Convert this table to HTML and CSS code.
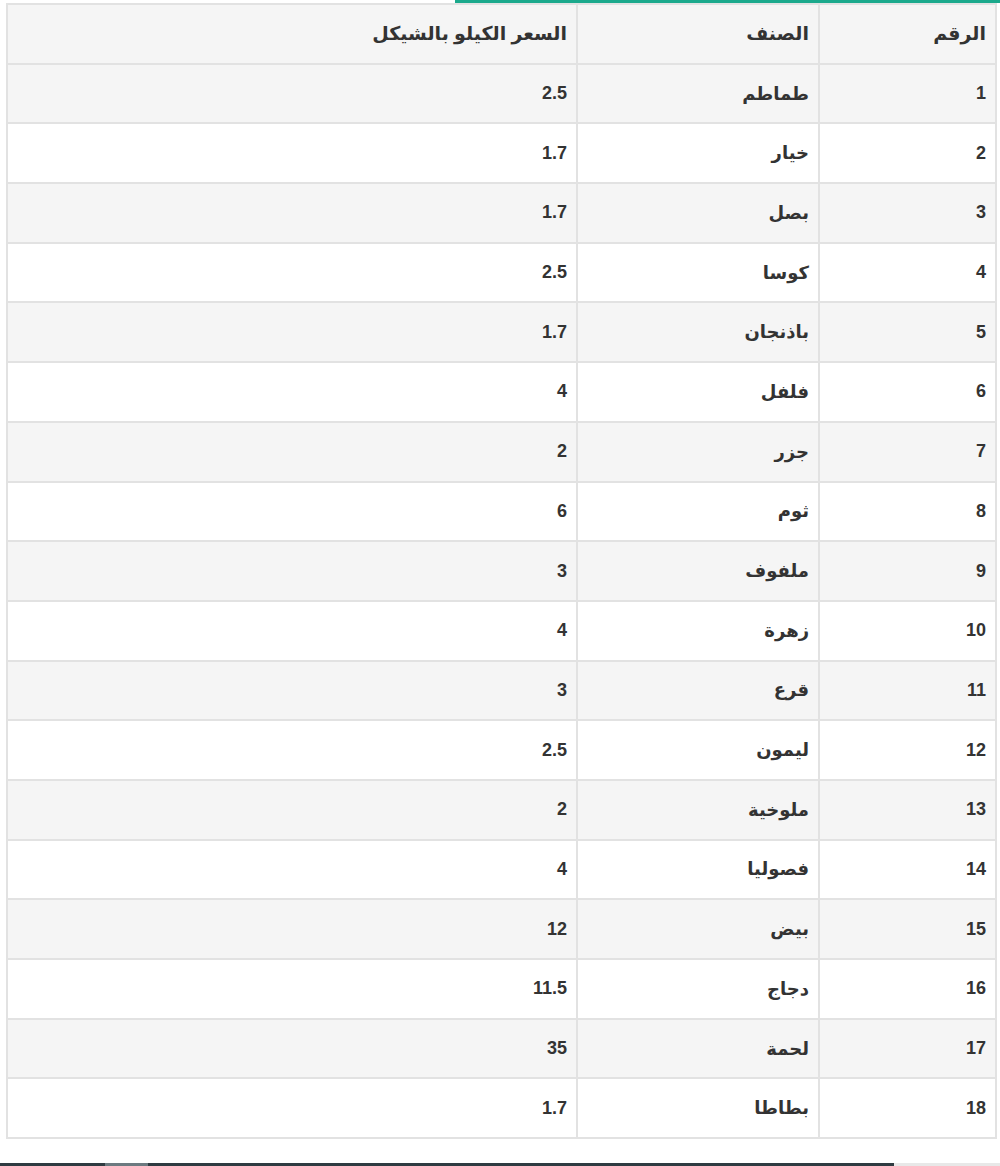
FILE: index.html
```html
<!DOCTYPE html>
<html lang="ar" dir="rtl">
<head>
<meta charset="utf-8">
<link rel="stylesheet" href="styles.css">
</head>
<body>
<div class="page">
  <div class="topbar"><div class="accent"></div></div>
  <table class="prices">
    <colgroup><col class="c-num"><col class="c-item"><col class="c-price"></colgroup>
    <thead>
      <tr><th>الرقم</th><th>الصنف</th><th>السعر الكيلو بالشيكل</th></tr>
    </thead>
    <tbody>
      <tr><td>1</td><td>طماطم</td><td>2.5</td></tr>
      <tr><td>2</td><td>خيار</td><td>1.7</td></tr>
      <tr><td>3</td><td>بصل</td><td>1.7</td></tr>
      <tr><td>4</td><td>كوسا</td><td>2.5</td></tr>
      <tr><td>5</td><td>باذنجان</td><td>1.7</td></tr>
      <tr><td>6</td><td>فلفل</td><td>4</td></tr>
      <tr><td>7</td><td>جزر</td><td>2</td></tr>
      <tr><td>8</td><td>ثوم</td><td>6</td></tr>
      <tr><td>9</td><td>ملفوف</td><td>3</td></tr>
      <tr><td>10</td><td>زهرة</td><td>4</td></tr>
      <tr><td>11</td><td>قرع</td><td>3</td></tr>
      <tr><td>12</td><td>ليمون</td><td>2.5</td></tr>
      <tr><td>13</td><td>ملوخية</td><td>2</td></tr>
      <tr><td>14</td><td>فصوليا</td><td>4</td></tr>
      <tr><td>15</td><td>بيض</td><td>12</td></tr>
      <tr><td>16</td><td>دجاج</td><td>11.5</td></tr>
      <tr><td>17</td><td>لحمة</td><td>35</td></tr>
      <tr><td>18</td><td>بطاطا</td><td>1.7</td></tr>
    </tbody>
  </table>
  <div class="bottombar"><div class="dark"><span class="seg"></span></div></div>
</div>
</body>
</html>
```
FILE: styles.css
```css
html, body {
  margin: 0;
  padding: 0;
  background: #ffffff;
}
.page {
  width: 1000px;
  height: 1166px;
  display: flex;
  flex-direction: column;
  font-family: "Liberation Sans", "DejaVu Sans", sans-serif;
  color: #333333;
}
.topbar {
  height: 3px;
  display: flex;
  justify-content: flex-start;
}
.accent {
  width: 545px;
  height: 3px;
  background: #1ba98c;
}
.prices {
  align-self: flex-start;
  margin: 0 3px 0 0;
  width: 989px;
  border-collapse: collapse;
  table-layout: fixed;
  font-weight: bold;
  font-size: 18px;
}
.prices th, .prices td {
  border: 2px solid #e2e2e2;
  height: 57.7px;
  padding: 0 9px 0 8px;
  text-align: right;
  vertical-align: middle;
  overflow: hidden;
  white-space: nowrap;
}
.prices th {
  font-weight: bold;
  font-size: 19px;
}
.c-num { width: 177px; }
.c-item { width: 242px; }
.c-price { width: 570px; }
.prices thead tr,
.prices tbody tr:nth-child(odd) {
  background: #f5f5f5;
}
.prices tbody tr:nth-child(even) {
  background: #ffffff;
}
.bottombar {
  margin-top: auto;
  height: 3px;
  display: flex;
  direction: ltr;
  background: #e8e8e8;
}
.dark {
  width: 894px;
  height: 3px;
  background: #2f3b41;
  display: flex;
}
.seg {
  width: 43px;
  margin-left: 105px;
  background: #6c7a80;
}
```
